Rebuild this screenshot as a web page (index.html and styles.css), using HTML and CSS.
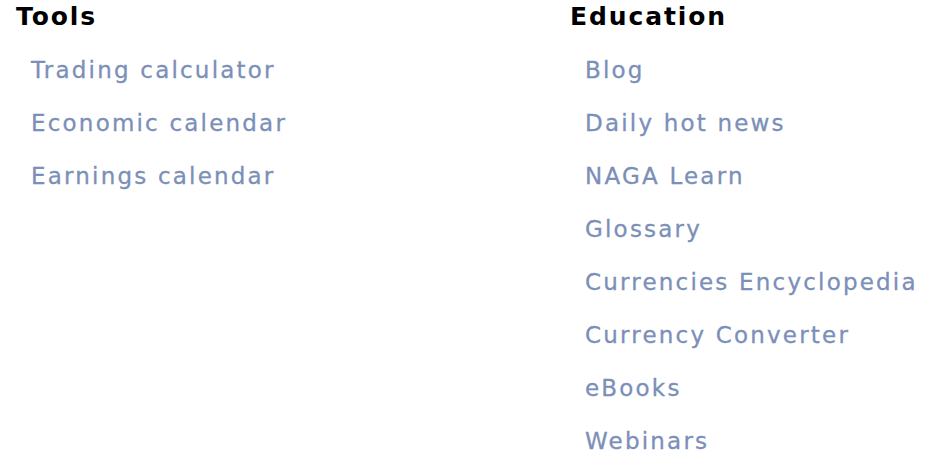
FILE: index.html
```html
<!DOCTYPE html>
<html lang="en">
<head>
  <meta charset="UTF-8">
  <meta name="viewport" content="width=device-width, initial-scale=1.0">
  <title>Footer links</title>
  <link rel="stylesheet" href="styles.css">
</head>

<body>
  <div id="footerLinks">
    <div class="linkColumn">
      <h2>Tools</h2>
      <ul>
        <li><a href="#">Trading calculator</a></li>
        <li><a href="#">Economic calendar</a></li>
        <li><a href="#">Earnings calendar</a></li>
      </ul>
    </div>
    <div class="linkColumn">
      <h2>Education</h2>
      <ul>
        <li><a href="#">Blog</a></li>
        <li><a href="#">Daily hot news</a></li>
        <li><a href="#">NAGA Learn</a></li>
        <li><a href="#">Glossary</a></li>
        <li><a href="#">Currencies Encyclopedia</a></li>
        <li><a href="#">Currency Converter</a></li>
        <li><a href="#">eBooks</a></li>
        <li><a href="#">Webinars</a></li>
      </ul>
    </div>
  </div>
</body>
</html>
```

FILE: styles.css
```css
body {
  margin: 0;
  background-color: #fff;
  font-family: "DejaVu Sans", Roboto, sans-serif;
}

#footerLinks {
  display: grid;
  grid-template-columns: 554px 1fr;
  padding: 0 0 0 16px;
}

.linkColumn h2 {
  margin: 0;
  height: 34px;
  line-height: 34px;
  font-size: 25px;
  font-weight: 700;
  letter-spacing: 1.9px;
  color: #000;
}

.linkColumn ul {
  list-style: none;
  margin: 0;
  padding: 10px 0 0 15px;
}

.linkColumn li {
  height: 53px;
  line-height: 53px;
}

.linkColumn a {
  font-size: 23px;
  letter-spacing: 2.2px;
  color: #7b8fb8;
  text-decoration: none;
  -webkit-text-stroke: 0.3px #7b8fb8;
}
```
